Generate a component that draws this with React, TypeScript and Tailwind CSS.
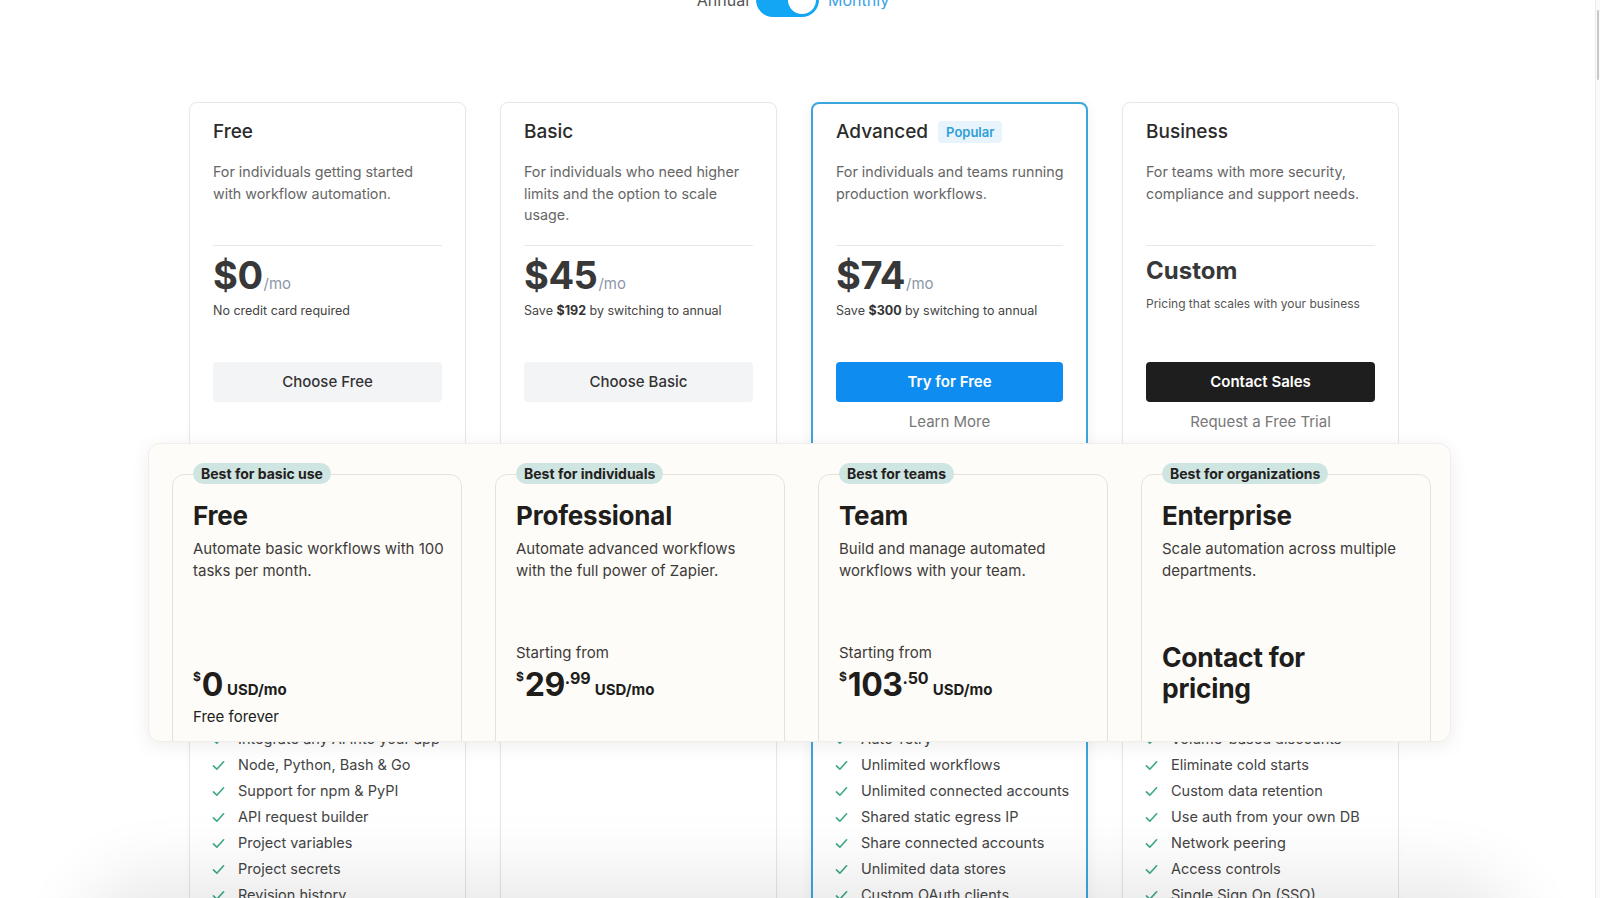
import React from "react";

type TopPlan = {
  name: string;
  popular?: boolean;
  desc: string;
  price?: string;
  custom?: boolean;
  sub: React.ReactNode;
  btn: string;
  btnClass: string;
  link?: string;
  features: string[];
};

const hidden = [
  "Unlimited steps",
  "Webhooks",
  "Scheduled triggers",
  "Email triggers",
  "Custom code",
  "Run history",
  "Version control",
  "Environment variables",
  "Team access",
  "Error notifications",
  "Live debugging",
];

const topPlans: TopPlan[] = [
  {
    name: "Free",
    desc: "For individuals getting started\nwith workflow automation.",
    price: "$0",
    sub: <>No credit card required</>,
    btn: "Choose Free",
    btnClass: "bg-[#f3f4f6] text-[#333333]",
    features: [
      ...hidden,
      "Integrate any AI into your app",
      "Node, Python, Bash & Go",
      "Support for npm & PyPI",
      "API request builder",
      "Project variables",
      "Project secrets",
      "Revision history",
    ],
  },
  {
    name: "Basic",
    desc: "For individuals who need higher\nlimits and the option to scale\nusage.",
    price: "$45",
    sub: (
      <>
        Save <span className="font-bold text-[#333]">$192</span> by switching to annual
      </>
    ),
    btn: "Choose Basic",
    btnClass: "bg-[#f3f4f6] text-[#333333]",
    features: hidden.slice(0, 10),
  },
  {
    name: "Advanced",
    popular: true,
    desc: "For individuals and teams running\nproduction workflows.",
    price: "$74",
    sub: (
      <>
        Save <span className="font-bold text-[#333]">$300</span> by switching to annual
      </>
    ),
    btn: "Try for Free",
    btnClass: "bg-[#0f8cf0] text-white font-semibold",
    link: "Learn More",
    features: [
      ...hidden,
      "Auto-retry",
      "Unlimited workflows",
      "Unlimited connected accounts",
      "Shared static egress IP",
      "Share connected accounts",
      "Unlimited data stores",
      "Custom OAuth clients",
    ],
  },
  {
    name: "Business",
    desc: "For teams with more security,\ncompliance and support needs.",
    custom: true,
    sub: <>Pricing that scales with your business</>,
    btn: "Contact Sales",
    btnClass: "bg-[#1e1e1e] text-white font-semibold",
    link: "Request a Free Trial",
    features: [
      ...hidden,
      "Volume-based discounts",
      "Eliminate cold starts",
      "Custom data retention",
      "Use auth from your own DB",
      "Network peering",
      "Access controls",
      "Single Sign On (SSO)",
    ],
  },
];

type Tier = {
  badge: string;
  name: string;
  desc: string;
  starting: boolean;
  dollars?: string;
  cents?: string;
  note?: string;
  contact?: boolean;
};

const tiers: Tier[] = [
  {
    badge: "Best for basic use",
    name: "Free",
    desc: "Automate basic workflows with 100\ntasks per month.",
    starting: false,
    dollars: "0",
    note: "Free forever",
  },
  {
    badge: "Best for individuals",
    name: "Professional",
    desc: "Automate advanced workflows\nwith the full power of Zapier.",
    starting: true,
    dollars: "29",
    cents: ".99",
  },
  {
    badge: "Best for teams",
    name: "Team",
    desc: "Build and manage automated\nworkflows with your team.",
    starting: true,
    dollars: "103",
    cents: ".50",
  },
  {
    badge: "Best for organizations",
    name: "Enterprise",
    desc: "Scale automation across multiple\ndepartments.",
    starting: false,
    contact: true,
  },
];

function Check() {
  return (
    <svg width="13" height="13" viewBox="0 0 14 14" fill="none" className="shrink-0">
      <path
        d="M1.5 7.5 L5.2 11 L12.5 3"
        stroke="#3fa98a"
        strokeWidth="1.8"
        strokeLinecap="round"
        strokeLinejoin="round"
      />
    </svg>
  );
}

function TopCard({ p }: { p: TopPlan }) {
  const outer = p.popular
    ? "border-2 border-[#3ba6dc] pt-[14px] px-[23px] shadow-[0_2px_14px_rgba(0,0,0,0.06)]"
    : "border border-[#e6e7ea] pt-[15px] px-[23px] shadow-[0_1px_6px_rgba(0,0,0,0.025)]";
  return (
    <div className={`h-[820px] rounded-[8px] bg-white flex flex-col ${outer}`}>
      <div className="flex items-center h-[28px]">
        <span className="text-[19px] leading-[28px] font-medium text-[#2b2b2b]">{p.name}</span>
        {p.popular && (
          <span className="ml-[10px] h-[22px] px-[8px] rounded-[4px] bg-[#e7f4fc] text-[#2f9fd8] text-[13px] font-semibold leading-[22px]">
            Popular
          </span>
        )}
      </div>
      <p className="mt-[15px] h-[84px] whitespace-pre text-[14.3px] leading-[21.5px] text-[#666666]">
        {p.desc}
      </p>
      <div className="border-t border-[#e8e8e8] h-[117px] pt-[10px]">
        {p.custom ? (
          <>
            <div className="text-[24px] leading-[30px] font-bold text-[#383838]">Custom</div>
            <div className="mt-[9px] text-[12px] leading-[18px] text-[#555555]">{p.sub}</div>
          </>
        ) : (
          <>
            <div className="flex items-baseline">
              <span className="text-[38px] leading-[38px] font-bold text-[#383838] tracking-[-0.5px]">
                {p.price}
              </span>
              <span className="text-[15px] text-[#8d96a8] ml-[1px]">/mo</span>
            </div>
            <div className="mt-[5px] text-[12.5px] leading-[20px] text-[#444444]">{p.sub}</div>
          </>
        )}
      </div>
      <button
        className={`h-[40px] w-full rounded-[4px] text-[15px] font-medium ${p.btnClass}`}
      >
        {p.btn}
      </button>
      <div className="mt-[9px] h-[22px] text-center text-[15px] leading-[22px] text-[#777777]">
        {p.link ?? ""}
      </div>
      <ul className="mt-[7px] flex flex-col">
        {p.features.map((f, i) => (
          <li key={i} className="h-[26px] flex items-center">
            <span className="w-[13px] ml-[-1px]">
              <Check />
            </span>
            <span className="ml-[13px] text-[14.5px] text-[#444444] whitespace-nowrap">{f}</span>
          </li>
        ))}
      </ul>
    </div>
  );
}

function TierCard({ t }: { t: Tier }) {
  return (
    <div className="relative h-[420px] rounded-[12px] border border-[#e6e2da] bg-[#fdfcf9] px-[20px] pt-[25px]">
      <span className="absolute left-[20px] top-[-12px] h-[21px] px-[8px] rounded-full bg-[#cfe5e1] text-[14px] leading-[21px] font-bold text-[#242020] whitespace-nowrap">
        {t.badge}
      </span>
      <div className="text-[26px] leading-[32px] font-bold text-[#201d1b] tracking-[-0.2px]">{t.name}</div>
      <p className="mt-[6px] h-[104px] whitespace-pre text-[15px] leading-[21.5px] text-[#3d3a37]">
        {t.desc}
      </p>
      {t.contact ? (
        <div className="text-[26.5px] leading-[31px] font-bold text-[#201d1b] tracking-[-0.3px]">
          Contact for
          <br />
          pricing
        </div>
      ) : (
        <>
          <div className="h-[22px] text-[15px] leading-[22px] text-[#3d3a37]">
            {t.starting ? "Starting from" : ""}
          </div>
          <div className="flex items-start h-[42px] text-[#201d1b] font-bold">
            <span className="mt-[7px] text-[12px] leading-[12px]">$</span>
            <span className="mt-[5px] ml-[1px] text-[32px] leading-[31px] tracking-[-0.5px]">{t.dollars}</span>
            {t.cents && (
              <span className="mt-[6px] text-[16px] leading-[16px]">{t.cents}</span>
            )}
            <span className="mt-[18px] ml-[4px] text-[15px] leading-[15px]">USD/mo</span>
          </div>
          {t.note && (
            <div className="text-[15px] leading-[22px] text-[#201d1b]">{t.note}</div>
          )}
        </>
      )}
    </div>
  );
}

export default function App() {
  return (
    <div className="relative w-full h-[898px] overflow-hidden bg-white font-[Inter,sans-serif]">
      <div className="flex justify-center items-center gap-[7px] -mt-[17px] h-[34px] pr-[14px]">
        <span className="text-[16px] text-[#555555]">Annual</span>
        <div className="w-[63px] h-[34px] rounded-full bg-[#12a6f4] flex items-center justify-end pr-[3px]">
          <div className="w-[28px] h-[28px] rounded-full bg-white" />
        </div>
        <span className="ml-[2px] text-[16px] text-[#3aa3e3]">Monthly</span>
      </div>

      <div className="mt-[85px] ml-[189px] grid grid-cols-[repeat(4,277px)] gap-x-[34px]">
        {topPlans.map((p) => (
          <TopCard key={p.name} p={p} />
        ))}
      </div>

      <div className="absolute left-[148px] top-[443px] w-[1303px] h-[299px] rounded-[12px] bg-[#fdfcf9] overflow-hidden shadow-[0_4px_20px_rgba(0,0,0,0.07)] border border-[#f1eee8]">
        <div className="pt-[30px] pl-[23px] grid grid-cols-[repeat(4,290px)] gap-x-[33px]">
          {tiers.map((t) => (
            <TierCard key={t.name} t={t} />
          ))}
        </div>
      </div>

      <div className="absolute left-[120px] right-[120px] top-[915px] h-[60px] rounded-[40px] bg-[#d0d0d0] shadow-[0_0_70px_40px_rgba(0,0,0,0.09)]" />

      <div className="absolute right-0 top-0 h-full w-[5px] border-l border-[#ececec] bg-[#fafafa]">
        <div className="absolute left-[1px] top-[10px] h-[70px] w-[2px] rounded-full bg-[#c9c9c9]" />
      </div>
    </div>
  );
}
